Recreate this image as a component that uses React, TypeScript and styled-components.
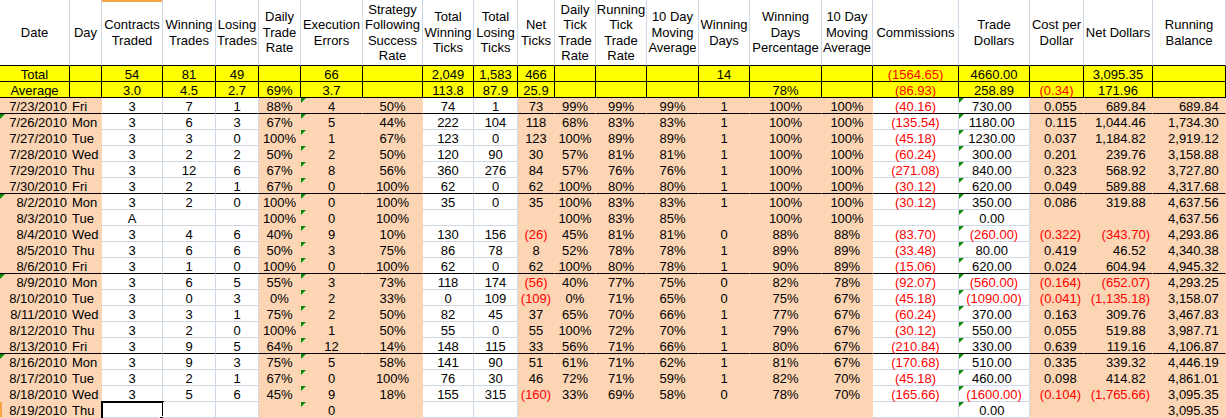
import React from "react";
import styled, { createGlobalStyle } from "styled-components";

const GlobalStyle = createGlobalStyle`
  html, body { margin: 0; padding: 0; background: #ffffff; }
  body { font-family: "Liberation Sans", Arial, sans-serif; overflow: hidden; }
`;

type Fill = "peach" | "white";
type Align = "center" | "right" | "left";

interface Col {
  title: string;
  width: number;
  fill: Fill;
  align: Align;
  acct?: boolean;
  tri?: boolean;
}

const PEACH = "#fcd5b4";
const GRID = "#d0d7e5";
const YELLOW = "#ffff00";
const RED = "#ff0000";

const cols: Col[] = [
  { title: "Date", width: 70, fill: "peach", align: "right" },
  { title: "Day", width: 32, fill: "peach", align: "left" },
  { title: "Contracts Traded", width: 61, fill: "white", align: "center" },
  { title: "Winning Trades", width: 53, fill: "white", align: "center" },
  { title: "Losing Trades", width: 43, fill: "white", align: "center" },
  { title: "Daily Trade Rate", width: 42, fill: "peach", align: "center" },
  { title: "Execution Errors", width: 62, fill: "peach", align: "center", tri: true },
  { title: "Strategy Following Success Rate", width: 60, fill: "peach", align: "center" },
  { title: "Total Winning Ticks", width: 51, fill: "white", align: "center" },
  { title: "Total Losing Ticks", width: 44, fill: "white", align: "center" },
  { title: "Net Ticks", width: 37, fill: "peach", align: "center" },
  { title: "Daily Tick Trade Rate", width: 41, fill: "peach", align: "center" },
  { title: "Running Tick Trade Rate", width: 51, fill: "peach", align: "center" },
  { title: "10 Day Moving Average", width: 52, fill: "peach", align: "center" },
  { title: "Winning Days", width: 51, fill: "peach", align: "center" },
  { title: "Winning Days Percentage", width: 72, fill: "peach", align: "center" },
  { title: "10 Day Moving Average", width: 51, fill: "peach", align: "center" },
  { title: "Commissions", width: 86, fill: "white", align: "center", acct: true },
  { title: "Trade Dollars", width: 71, fill: "white", align: "center", acct: true, tri: true },
  { title: "Cost per Dollar", width: 54, fill: "peach", align: "right", acct: true },
  { title: "Net Dollars", width: 69, fill: "peach", align: "right", acct: true },
  { title: "Running Balance", width: 73, fill: "peach", align: "right", acct: true },
];

const totalRow = [
  "Total", "", "54", "81", "49", "", "66", "", "2,049", "1,583", "466", "", "", "", "14", "", "",
  "(1564.65)", "4660.00", "", "3,095.35", "",
];
const averageRow = [
  "Average", "", "3.0", "4.5", "2.7", "69%", "3.7", "", "113.8", "87.9", "25.9", "", "", "", "", "78%", "",
  "(86.93)", "258.89", "(0.34)", "171.96", "",
];

const rawRows = [
  "7/23/2010|Fri|3|7|1|88%|4|50%|74|1|73|99%|99%|99%|1|100%|100%|(40.16)|730.00|0.055|689.84|689.84",
  "7/26/2010|Mon|3|6|3|67%|5|44%|222|104|118|68%|83%|83%|1|100%|100%|(135.54)|1180.00|0.115|1,044.46|1,734.30",
  "7/27/2010|Tue|3|3|0|100%|1|67%|123|0|123|100%|89%|89%|1|100%|100%|(45.18)|1230.00|0.037|1,184.82|2,919.12",
  "7/28/2010|Wed|3|2|2|50%|2|50%|120|90|30|57%|81%|81%|1|100%|100%|(60.24)|300.00|0.201|239.76|3,158.88",
  "7/29/2010|Thu|3|12|6|67%|8|56%|360|276|84|57%|76%|76%|1|100%|100%|(271.08)|840.00|0.323|568.92|3,727.80",
  "7/30/2010|Fri|3|2|1|67%|0|100%|62|0|62|100%|80%|80%|1|100%|100%|(30.12)|620.00|0.049|589.88|4,317.68",
  "8/2/2010|Mon|3|2|0|100%|0|100%|35|0|35|100%|83%|83%|1|100%|100%|(30.12)|350.00|0.086|319.88|4,637.56",
  "8/3/2010|Tue|A|||100%|0|100%||||100%|83%|85%||100%|100%||0.00|||4,637.56",
  "8/4/2010|Wed|3|4|6|40%|9|10%|130|156|(26)|45%|81%|81%|0|88%|88%|(83.70)|(260.00)|(0.322)|(343.70)|4,293.86",
  "8/5/2010|Thu|3|6|6|50%|3|75%|86|78|8|52%|78%|78%|1|89%|89%|(33.48)|80.00|0.419|46.52|4,340.38",
  "8/6/2010|Fri|3|1|0|100%|0|100%|62|0|62|100%|80%|78%|1|90%|89%|(15.06)|620.00|0.024|604.94|4,945.32",
  "8/9/2010|Mon|3|6|5|55%|3|73%|118|174|(56)|40%|77%|75%|0|82%|78%|(92.07)|(560.00)|(0.164)|(652.07)|4,293.25",
  "8/10/2010|Tue|3|0|3|0%|2|33%|0|109|(109)|0%|71%|65%|0|75%|67%|(45.18)|(1090.00)|(0.041)|(1,135.18)|3,158.07",
  "8/11/2010|Wed|3|3|1|75%|2|50%|82|45|37|65%|70%|66%|1|77%|67%|(60.24)|370.00|0.163|309.76|3,467.83",
  "8/12/2010|Thu|3|2|0|100%|1|50%|55|0|55|100%|72%|70%|1|79%|67%|(30.12)|550.00|0.055|519.88|3,987.71",
  "8/13/2010|Fri|3|9|5|64%|12|14%|148|115|33|56%|71%|66%|1|80%|67%|(210.84)|330.00|0.639|119.16|4,106.87",
  "8/16/2010|Mon|3|9|3|75%|5|58%|141|90|51|61%|71%|62%|1|81%|67%|(170.68)|510.00|0.335|339.32|4,446.19",
  "8/17/2010|Tue|3|2|1|67%|0|100%|76|30|46|72%|71%|59%|1|82%|70%|(45.18)|460.00|0.098|414.82|4,861.01",
  "8/18/2010|Wed|3|5|6|45%|9|18%|155|315|(160)|33%|69%|58%|0|78%|70%|(165.66)|(1600.00)|(0.104)|(1,765.66)|3,095.35",
  "8/19/2010|Thu|||||0||||||||||||0.00|||3,095.35",
];

const rows = rawRows.map((r) => r.split("|"));
const weekEnds = new Set([0, 5, 10, 15]);
const mondays = new Set([1, 6, 11, 16]);
const lastRow = rows.length - 1;

const Sheet = styled.div`
  display: grid;
  grid-template-columns: ${cols.map((c) => `${c.width}px`).join(" ")};
  grid-template-rows: 66px;
  grid-auto-rows: 16px;
  width: 1226px;
  font-family: "Liberation Sans", Arial, sans-serif;
  font-size: 13px;
  color: #000;
`;

const HeadCell = styled.div<{ $marked?: boolean }>`
  position: relative;
  box-sizing: border-box;
  background: #ffffff;
  border-right: 1px solid ${GRID};
  border-bottom: 1px solid #000;
  display: flex;
  align-items: center;
  justify-content: center;
  text-align: center;
  line-height: 15.5px;
  padding: 0;
  overflow: hidden;
  box-shadow: ${(p) => (p.$marked ? "inset 0 2px 0 #f5a443" : "none")};
`;

const SumCell = styled.div<{ $red?: boolean }>`
  box-sizing: border-box;
  background: ${YELLOW};
  border-right: 1px solid #000;
  border-bottom: 1px solid #000;
  display: flex;
  align-items: flex-end;
  justify-content: center;
  line-height: 13px;
  white-space: nowrap;
  color: ${(p) => (p.$red ? RED : "#000")};
`;

const DataCell = styled.div<{
  $fill: Fill;
  $align: Align;
  $weekEnd: boolean;
  $red: boolean;
  $rowMark?: boolean;
}>`
  position: relative;
  box-sizing: border-box;
  background: ${(p) => (p.$fill === "peach" ? PEACH : "#ffffff")};
  border-right: 1px solid ${(p) => (p.$fill === "peach" ? PEACH : GRID)};
  border-bottom: 1px solid
    ${(p) => (p.$weekEnd ? "#000" : p.$fill === "peach" ? PEACH : GRID)};
  display: flex;
  align-items: flex-end;
  justify-content: ${(p) =>
    p.$align === "center" ? "center" : p.$align === "right" ? "flex-end" : "flex-start"};
  padding: 0 ${(p) => (p.$align === "center" ? 0 : 2)}px;
  line-height: 13px;
  white-space: nowrap;
  color: ${(p) => (p.$red ? RED : "#000")};
  box-shadow: ${(p) => (p.$rowMark ? "inset 2px 0 0 #f5a443" : "none")};
`;

const Ghost = styled.span`
  visibility: hidden;
`;

const Flag = styled.span`
  position: absolute;
  top: 0;
  left: 0;
  width: 0;
  height: 0;
  border-top: 5px solid #0a8a0a;
  border-right: 5px solid transparent;
`;

const Selection = styled.span`
  position: absolute;
  top: -1px;
  left: -1px;
  right: -2px;
  bottom: -4px;
  border: 2px solid #000;
  pointer-events: none;
`;

const Handle = styled.span`
  position: absolute;
  right: -4px;
  bottom: -4px;
  width: 5px;
  height: 5px;
  background: #000;
  border: 1px solid #fff;
`;

function Value({ text, acct }: { text: string; acct?: boolean }) {
  const neg = text.startsWith("(");
  return (
    <span>
      {text}
      {acct && text !== "" && !neg ? <Ghost>)</Ghost> : null}
    </span>
  );
}

export default function App() {
  return (
    <>
      <GlobalStyle />
      <Sheet>
        {cols.map((c, i) => (
          <HeadCell key={`h${i}`} $marked={i === 2}>
            {c.title}
          </HeadCell>
        ))}
        {[totalRow, averageRow].map((r, ri) =>
          r.map((v, ci) => (
            <SumCell key={`s${ri}-${ci}`} $red={v.startsWith("(")}>
              {v}
            </SumCell>
          ))
        )}
        {rows.map((r, ri) =>
          r.map((v, ci) => {
            const col = cols[ci];
            const flag = Boolean(col.tri) || (ci === 0 && mondays.has(ri));
            return (
              <DataCell
                key={`d${ri}-${ci}`}
                $fill={col.fill}
                $align={col.align}
                $weekEnd={weekEnds.has(ri)}
                $red={v.startsWith("(")}
                $rowMark={ri === lastRow && ci === 0}
              >
                {flag ? <Flag /> : null}
                <Value text={v} acct={col.acct} />
                {ri === lastRow && ci === 2 ? (
                  <Selection>
                    <Handle />
                  </Selection>
                ) : null}
              </DataCell>
            );
          })
        )}
      </Sheet>
    </>
  );
}
